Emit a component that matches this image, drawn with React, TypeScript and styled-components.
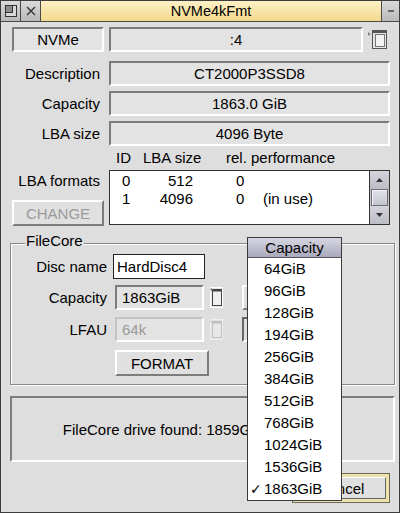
import React from "react";
import styled, { createGlobalStyle, css } from "styled-components";

const GlobalStyle = createGlobalStyle`
  html, body { margin: 0; padding: 0; background: #dddddd; }
  body {
    font-family: "Liberation Sans", Arial, "DejaVu Sans", sans-serif;
    font-size: 15px;
    color: #000;
  }
`;

const sunken = css`
  border: 2px solid;
  border-color: #7c7c7c #ffffff #ffffff #7c7c7c;
`;

const raised = css`
  border: 2px solid;
  border-color: #ffffff #7c7c7c #7c7c7c #ffffff;
`;

const Window = styled.div`
  position: relative;
  width: 400px;
  height: 513px;
  box-sizing: border-box;
  border: 1px solid #3c3c3c;
  background: #dedede;
  display: flex;
  flex-direction: column;
  overflow: hidden;
`;

const TitleBar = styled.div`
  display: flex;
  height: 21px;
  box-sizing: border-box;
  border-bottom: 1px solid #4a4a4a;
`;

const TitleIcon = styled.div<{ $w: number }>`
  width: ${(p) => p.$w}px;
  flex: none;
  display: flex;
  align-items: center;
  justify-content: center;
  background: linear-gradient(#dadada, #b9b9b9);
  border-right: 1px solid #4a4a4a;
  &:last-child { border-right: 0; }
`;

const Title = styled.div`
  flex: 1;
  text-align: center;
  line-height: 20px;
  font-size: 14.5px;
  background: linear-gradient(#fdf0c6, #f4d98c);
  border-right: 1px solid #4a4a4a;
`;

const Content = styled.div`
  display: flex;
  flex-direction: column;
  padding: 5px 4px 0 9px;
`;

const Row = styled.div<{ $top?: number }>`
  display: grid;
  grid-template-columns: 92px 1fr;
  column-gap: 5px;
  align-items: start;
  padding: 0 5px 0 2px;
  margin-top: ${(p) => p.$top ?? 0}px;
`;

const Label = styled.div<{ $h?: number }>`
  text-align: right;
  padding-right: 4px;
  line-height: ${(p) => p.$h ?? 25}px;
  white-space: nowrap;
`;

const Field = styled.div<{ $w?: number; $center?: boolean; $grey?: boolean }>`
  ${sunken};
  box-sizing: border-box;
  height: 25px;
  ${(p) => (p.$w ? `width: ${p.$w}px;` : "")}
  background: #e3e3e3;
  display: flex;
  align-items: center;
  justify-content: ${(p) => (p.$center ? "center" : "flex-start")};
  padding: 0 5px;
  white-space: nowrap;
  ${(p) =>
    p.$grey &&
    css`
      border-color: #c4c4c4 #ffffff #ffffff #c4c4c4;
      color: #9a9a9a;
    `}
`;

const Inline = styled.div<{ $gap?: number }>`
  display: flex;
  align-items: center;
  gap: ${(p) => p.$gap ?? 4}px;
`;

const Button = styled.div<{ $w: number; $h: number; $grey?: boolean; $top?: number; $left?: number }>`
  ${raised};
  box-sizing: border-box;
  width: ${(p) => p.$w}px;
  height: ${(p) => p.$h}px;
  margin-top: ${(p) => p.$top ?? 0}px;
  margin-left: ${(p) => p.$left ?? 0}px;
  background: #e0e0e0;
  display: flex;
  align-items: center;
  justify-content: center;
  color: ${(p) => (p.$grey ? "#9a9a9a" : "#000")};
`;

const LabelStack = styled.div`
  display: flex;
  flex-direction: column;
`;

const HeaderRow = styled.div`
  display: grid;
  grid-template-columns: 7px 27px 83px 1fr;
  line-height: 16px;
  height: 16px;
  white-space: nowrap;
`;

const ListWrap = styled.div`
  display: flex;
  height: 55px;
`;

const ListBox = styled.div`
  width: 261px;
  box-sizing: border-box;
  border: 1px solid #333;
  background: #fff;
  padding-top: 1px;
`;

const ListRow = styled.div`
  display: grid;
  grid-template-columns: 12px 22px 49px 70px 1fr;
  height: 18px;
  line-height: 18px;
`;

const Num = styled.span<{ $pad?: number }>`
  text-align: ${(p) => (p.$pad === undefined ? "right" : "left")};
  padding-left: ${(p) => p.$pad ?? 0}px;
`;

const ScrollBar = styled.div`
  width: 20px;
  box-sizing: border-box;
  border: 1px solid #333;
  border-left: 0;
  background: #c6c6ce;
  display: flex;
  flex-direction: column;
`;

const ScrollArrow = styled.div`
  height: 18px;
  display: flex;
  align-items: center;
  justify-content: center;
  background: linear-gradient(#d4d4dc, #bcbcc6);
`;

const ScrollThumb = styled.div`
  height: 17px;
  box-sizing: border-box;
  margin: 0 1px;
  border: 1px solid #6e6e78;
  box-shadow: inset 1px 1px 0 #f4f4f8;
  background: linear-gradient(#e2e2ea, #c4c4ce);
`;

const Group = styled.fieldset`
  margin: 7px 0 0;
  padding: 0 0 8px;
  min-width: 0;
  border: 1px solid #888;
  box-shadow: inset 1px 1px 0 #fff, 1px 1px 0 #fff;
`;

const Legend = styled.legend`
  margin-left: 14px;
  padding: 0 1px 4px;
  line-height: 16px;
  background: #dedede;
`;

const GroupRow = styled.div<{ $top: number }>`
  display: grid;
  grid-template-columns: 96px auto;
  column-gap: 6px;
  justify-content: start;
  align-items: center;
  margin-top: ${(p) => p.$top}px;
`;

const GroupLabel = styled.div`
  text-align: right;
  line-height: 25px;
  white-space: nowrap;
`;

const Writable = styled.div`
  width: 92px;
  height: 25px;
  box-sizing: border-box;
  border: 1px solid #222;
  background: #fff;
  padding-left: 3px;
  line-height: 23px;
`;

const PopIconBox = styled.div<{ $ml: number }>`
  margin-left: ${(p) => p.$ml}px;
  display: flex;
`;

const HiddenBox = styled.div<{ $dark?: boolean }>`
  width: 30px;
  height: 25px;
  box-sizing: border-box;
  margin-left: 19px;
  ${raised};
  ${(p) => p.$dark && "border-color: #666 #fff #fff #666;"}
`;

const StatusBox = styled.div`
  ${sunken};
  margin-top: 11px;
  height: 66px;
  box-sizing: border-box;
  display: flex;
  align-items: center;
  justify-content: center;
  white-space: nowrap;
`;

const Footer = styled.div`
  display: flex;
  justify-content: flex-end;
  padding-right: 5px;
  margin-top: 11px;
`;

const DefaultFrame = styled.div`
  width: 98px;
  height: 30px;
  box-sizing: border-box;
  border: 1px solid #6a6a5a;
  padding: 3px;
  background: #efe3ad;
  display: flex;
`;

const DefaultInner = styled.div`
  flex: 1;
  border: 1px solid;
  border-color: #fff #666 #666 #fff;
  background: #e0e0e0;
  display: flex;
  align-items: center;
  justify-content: center;
`;

const Menu = styled.div`
  position: absolute;
  left: 246px;
  top: 236px;
  width: 95px;
  box-sizing: border-box;
  border: 1px solid #3a3a3a;
  background: #fff;
`;

const MenuTitle = styled.div`
  height: 19px;
  line-height: 19px;
  text-align: center;
  background: linear-gradient(#d6d6e2, #a9a9bd);
  border-bottom: 1px solid #555;
`;

const MenuItem = styled.div`
  display: flex;
  height: 22px;
  line-height: 22px;
`;

const Tick = styled.span`
  width: 16px;
  padding-left: 2px;
  box-sizing: border-box;
  font-family: "DejaVu Sans", sans-serif;
  font-size: 14px;
`;

const MenuIcon = () => (
  <svg width="21" height="21" viewBox="0 0 21 21">
    <polygon points="1,3 4,5 1,7" fill="#888" />
    <rect x="5.5" y="1.5" width="14" height="18" fill="#e6e6e6" stroke="#555" />
    <line x1="6" y1="3" x2="19" y2="3" stroke="#555" strokeWidth="2" />
    <rect x="8.5" y="5.5" width="9" height="12" fill="#f2f2f2" stroke="#777" />
  </svg>
);

const SmallPopIcon = ({ grey }: { grey?: boolean }) => {
  const c = grey ? "#c0c0c0" : "#444";
  return (
    <svg width="13" height="21" viewBox="0 0 13 21">
      <rect x="0.5" y="0.5" width="12" height="20" fill="#e4e4e4" stroke={grey ? "#eee" : "#fff"} />
      <rect x="2.5" y="2.5" width="9" height="16" fill={grey ? "#e8e8e8" : "#f0f0f0"} stroke={c} />
      <line x1="2.5" y1="3.5" x2="11.5" y2="3.5" stroke={c} strokeWidth="2" />
      <polygon points="0.5,1 3,2.5 0.5,4" fill={grey ? "#ccc" : "#777"} />
    </svg>
  );
};

const capacities = [
  "64GiB", "96GiB", "128GiB", "194GiB", "256GiB", "384GiB",
  "512GiB", "768GiB", "1024GiB", "1536GiB", "1863GiB",
];

const formats = [
  { id: "0", size: "512", perf: "0", note: "" },
  { id: "1", size: "4096", perf: "0", note: "(in use)" },
];

export default function App() {
  return (
    <>
      <GlobalStyle />
      <Window>
        <TitleBar>
          <TitleIcon $w={19}>
            <svg width="14" height="14" viewBox="0 0 14 14">
              <rect x="1.5" y="1.5" width="11" height="11" fill="#d8d8d8" stroke="#333" />
              <rect x="1.5" y="1.5" width="7" height="7" fill="#8c8c8c" stroke="#333" />
            </svg>
          </TitleIcon>
          <TitleIcon $w={19}>
            <svg width="12" height="12" viewBox="0 0 12 12">
              <path d="M2 2 L10 10 M10 2 L2 10" stroke="#333" strokeWidth="1.4" />
            </svg>
          </TitleIcon>
          <Title>NVMe4kFmt</Title>
          <TitleIcon $w={17}>
            <svg width="10" height="10" viewBox="0 0 10 10">
              <line x1="2" y1="5" x2="8" y2="5" stroke="#444" strokeWidth="1.5" />
            </svg>
          </TitleIcon>
        </TitleBar>

        <Content>
          <Row>
            <Field $center>NVMe</Field>
            <Inline $gap={4}>
              <Field $w={254} $center>:4</Field>
              <MenuIcon />
            </Inline>
          </Row>
          <Row $top={9}>
            <Label>Description</Label>
            <Field $center>CT2000P3SSD8</Field>
          </Row>
          <Row $top={5}>
            <Label>Capacity</Label>
            <Field $center>1863.0 GiB</Field>
          </Row>
          <Row $top={5}>
            <Label>LBA size</Label>
            <Field $center>4096 Byte</Field>
          </Row>
          <Row $top={4}>
            <span />
            <HeaderRow>
              <span />
              <span>ID</span>
              <span>LBA size</span>
              <span>rel. performance</span>
            </HeaderRow>
          </Row>
          <Row $top={4}>
            <LabelStack>
              <Label $h={22}>LBA formats</Label>
              <Button $w={92} $h={26} $top={8} $grey>CHANGE</Button>
            </LabelStack>
            <ListWrap>
              <ListBox>
                {formats.map((f) => (
                  <ListRow key={f.id}>
                    <span />
                    <Num $pad={0}>{f.id}</Num>
                    <Num>{f.size}</Num>
                    <Num $pad={43}>{f.perf}</Num>
                    <span>{f.note}</span>
                  </ListRow>
                ))}
              </ListBox>
              <ScrollBar>
                <ScrollArrow>
                  <svg width="7" height="4" viewBox="0 0 7 4">
                    <polygon points="0,4 3.5,0 7,4" fill="#333" />
                  </svg>
                </ScrollArrow>
                <ScrollThumb />
                <ScrollArrow>
                  <svg width="7" height="4" viewBox="0 0 7 4">
                    <polygon points="0,0 3.5,4 7,0" fill="#333" />
                  </svg>
                </ScrollArrow>
              </ScrollBar>
            </ListWrap>
          </Row>

          <Group>
            <Legend>FileCore</Legend>
            <GroupRow $top={1}>
              <GroupLabel>Disc name</GroupLabel>
              <Writable>HardDisc4</Writable>
            </GroupRow>
            <GroupRow $top={6}>
              <GroupLabel>Capacity</GroupLabel>
              <Inline $gap={0}>
                <Field $w={89} style={{ marginLeft: 2 }}>1863GiB</Field>
                <PopIconBox $ml={6}>
                  <SmallPopIcon />
                </PopIconBox>
                <HiddenBox />
              </Inline>
            </GroupRow>
            <GroupRow $top={7}>
              <GroupLabel>LFAU</GroupLabel>
              <Inline $gap={0}>
                <Field $w={89} $grey style={{ marginLeft: 2 }}>64k</Field>
                <PopIconBox $ml={6}>
                  <SmallPopIcon grey />
                </PopIconBox>
                <HiddenBox $dark />
              </Inline>
            </GroupRow>
            <GroupRow $top={8}>
              <span />
              <Button $w={94} $h={26} $left={2}>FORMAT</Button>
            </GroupRow>
          </Group>

          <StatusBox>FileCore drive found: 1859GiB, in drive :4.</StatusBox>

          <Footer>
            <DefaultFrame>
              <DefaultInner>Cancel</DefaultInner>
            </DefaultFrame>
          </Footer>
        </Content>

        <Menu>
          <MenuTitle>Capacity</MenuTitle>
          {capacities.map((c, i) => (
            <MenuItem key={c}>
              <Tick>{i === capacities.length - 1 ? "✓" : ""}</Tick>
              {c}
            </MenuItem>
          ))}
        </Menu>
      </Window>
    </>
  );
}
